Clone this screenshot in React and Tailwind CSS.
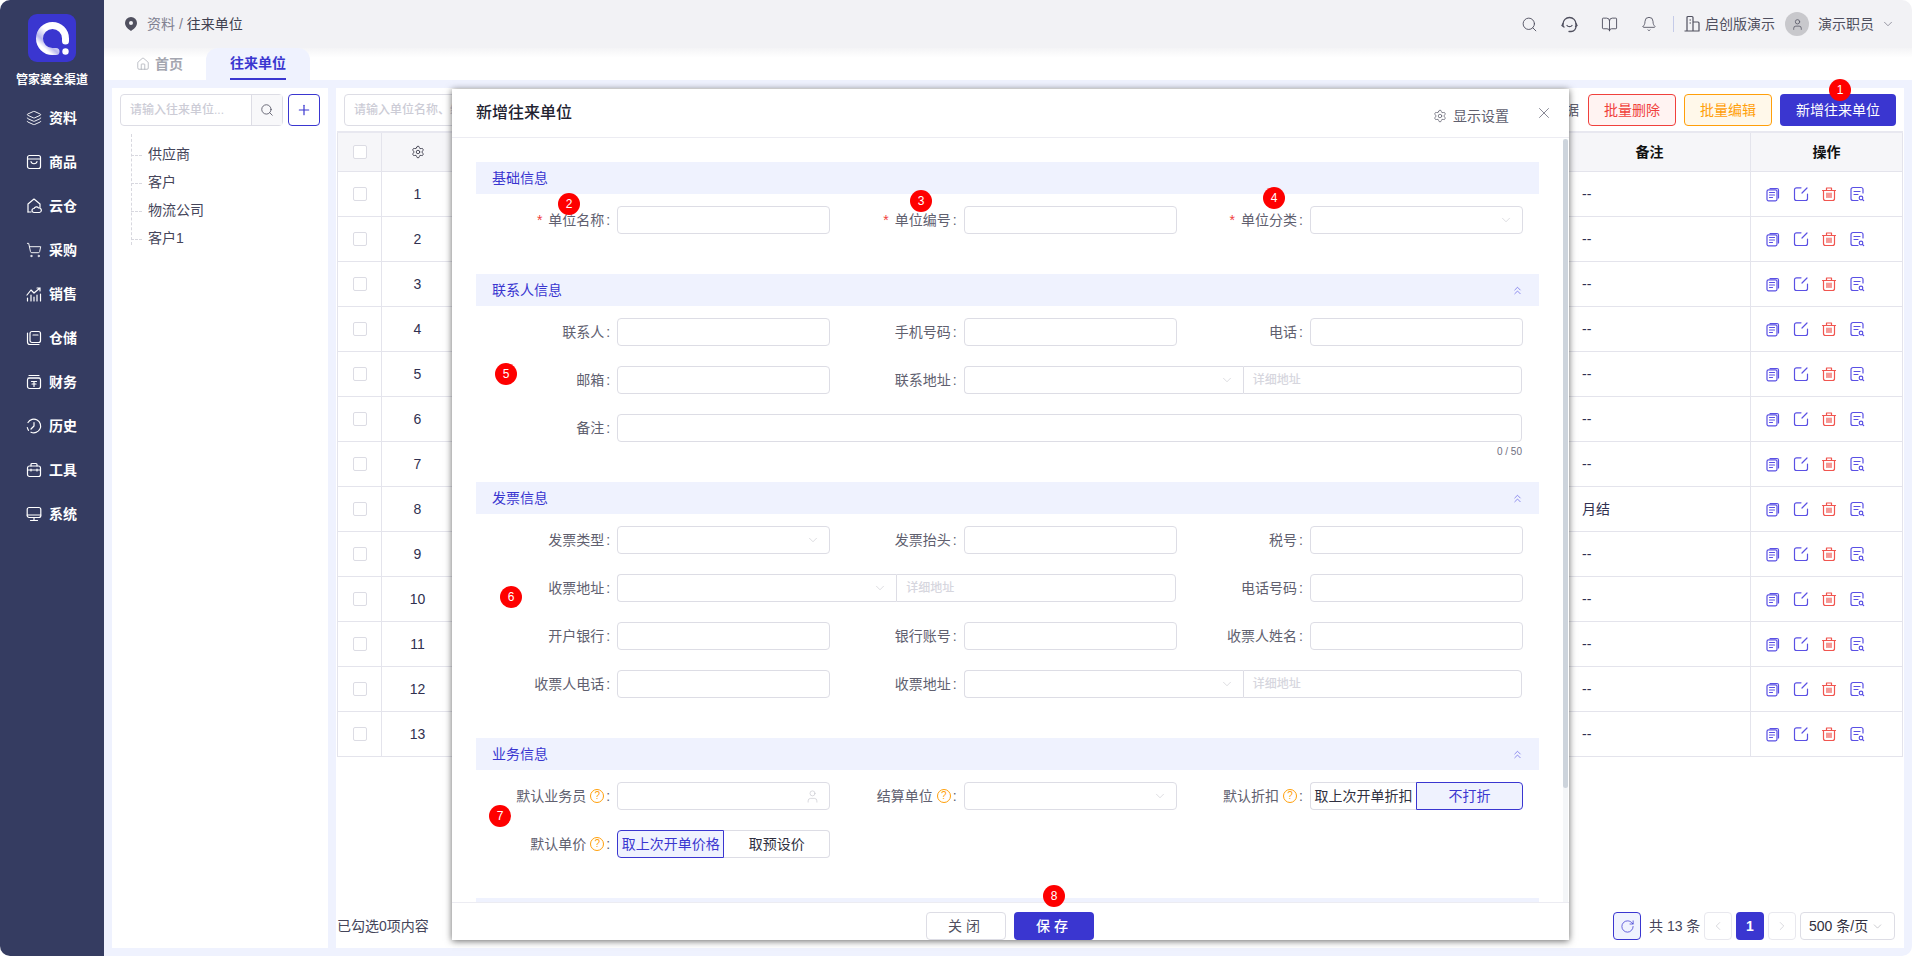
import React from "react";
import { Layers, ShoppingCart, Settings, Search, X, ChevronDown, ChevronsUp, User, RotateCw, BookOpen, Bell, Home, ChevronLeft, ChevronRight, Plus } from "lucide-react";

const Svg = ({ children, size = 16, className = "" }) => (
  <svg width={size} height={size} viewBox="0 0 16 16" fill="none" stroke="currentColor" strokeWidth="1.2" strokeLinecap="round" strokeLinejoin="round" className={className}>{children}</svg>
);

const navIcons = {
  goods: <><rect x="1.5" y="1.5" width="13" height="13" rx="2" /><path d="M1.5 5h13M5 7.5c.5 3 5.500 3 6 0" /></>,
  cloud: <><path d="M2 14V6l6-5 6 5v3" /><path d="M2 14h3M8 14.500a2 2 0 0 1 0-4 2.500 2.500 0 0 1 4.500-.5 2.300 2.300 0 0 1 1 4.500z" /></>,
  sale: <><path d="M1 9l4-5 3 3 6-5M11 2h3v3M1.500 12v3M5 9v6M8 11v4M11 9v6M14.500 8v7" /></>,
  store: <><path d="M1.500 3v9a2.500 2.500 0 0 0 2.500 2.500h9" /><rect x="4" y="1.500" width="10.500" height="11" rx="2" /><path d="M7 5h5" /></>,
  money: <><path d="M3 1.500h10M2 4h12" /><rect x="1.500" y="4" width="13" height="10.500" rx="2" /><path d="M5.500 7.500h5M8 7.500v5M6 10h4" /></>,
  history: <><path d="M5 14.200A6.800 6.800 0 1 0 2 4.500" /><path d="M1.300 9.500a6.800 6.800 0 0 0 1.200 2.800M8 4.500V8l-3 3" /></>,
  tool: <><path d="M5 4V2.500a1 1 0 0 1 1-1h4a1 1 0 0 1 1 1V4" /><rect x="1.500" y="4" width="13" height="10.500" rx="2" /><path d="M1.500 8h13M5 7v2M11 7v2" /></>,
  sys: <><rect x="1.200" y="1.500" width="13.600" height="10" rx="2" /><path d="M1.200 9h13.600M8 11.500v3M4.500 14.500h7" /></>,
};

const nav = [
  ["资料", <Layers size={16} strokeWidth={1.4} />],
  ["商品", <Svg>{navIcons.goods}</Svg>],
  ["云仓", <Svg>{navIcons.cloud}</Svg>],
  ["采购", <ShoppingCart size={16} strokeWidth={1.4} />],
  ["销售", <Svg>{navIcons.sale}</Svg>],
  ["仓储", <Svg>{navIcons.store}</Svg>],
  ["财务", <Svg>{navIcons.money}</Svg>],
  ["历史", <Svg>{navIcons.history}</Svg>],
  ["工具", <Svg>{navIcons.tool}</Svg>],
  ["系统", <Svg>{navIcons.sys}</Svg>],
];

const Logo = () => (
  <svg width="48" height="48" viewBox="0 0 48 48">
    <defs>
      <linearGradient id="lg" x1="0.9" y1="0.1" x2="0.2" y2="0.9">
        <stop offset="0.45" stopColor="#ffffff" />
        <stop offset="0.8" stopColor="#b9b8ee" />
        <stop offset="1" stopColor="#ffffff" />
      </linearGradient>
    </defs>
    <rect width="48" height="48" rx="9" fill="#3a36d0" />
    <path d="M37.500 27V24.500A13 13 0 1 0 24.500 37.500H28" fill="none" stroke="url(#lg)" strokeWidth="7" strokeLinecap="round" />
    <circle cx="37.500" cy="37.500" r="3.200" fill="#fff" />
  </svg>
);

const Sidebar = () => (
  <aside className="w-[104px] shrink-0 bg-[#353c61] flex flex-col text-white">
    <div className="flex flex-col items-center pt-[14px]">
      <Logo />
      <div className="mt-[9px] text-[12px] leading-[18px] font-bold whitespace-nowrap">管家婆全渠道</div>
    </div>
    <nav className="mt-[7px] flex flex-col">
      {nav.map(([t, ic]) => (
        <div key={t} className="h-[44px] flex items-center gap-[7px] pl-[26px]">
          {ic}
          <span className="text-[14px] font-bold">{t}</span>
        </div>
      ))}
    </nav>
  </aside>
);

const Header = () => (
  <header className="h-[48px] shrink-0 bg-[#f2f2f5] flex items-center pl-[21px] pr-[17px] text-[14px] text-[#50505f]">
    <svg width="12" height="14" viewBox="0 0 12 14" className="mr-[10px]"><path fillRule="evenodd" d="M6 0a6 6 0 0 1 6 6c0 3.500-3.500 6.500-6 8-2.500-1.500-6-4.500-6-8a6 6 0 0 1 6-6zm0 4a2 2 0 1 0 0 4 2 2 0 0 0 0-4z" fill="#50505f" /></svg>
    <span className="text-[#808090]">资料 / </span><span className="ml-1 text-[#40404f]">往来单位</span>
    <div className="ml-auto flex items-center">
      <Search size={17} strokeWidth={1.3} className="mr-[23px]" />
      <svg width="17" height="17" viewBox="0 0 17 17" fill="none" stroke="currentColor" strokeWidth="1.3" strokeLinecap="round" className="mr-[23px]"><path d="M2 9.500V8a6.500 6.500 0 0 1 13 0v2a5 5 0 0 1-5 5.500H8" /><path d="M2 7.500 L1 9.500 L3 11M15 7.500l1 2-1.500 1M6 9.500c1 1.500 4 1.500 5 0" /></svg>
      <BookOpen size={17} strokeWidth={1.3} className="mr-[23px]" />
      <Bell size={16} strokeWidth={1.3} className="mr-[16px]" />
      <div className="w-px h-[16px] bg-[#c5cbe8] mr-[10px]" />
      <svg width="16" height="18" viewBox="0 0 16 18" fill="none" stroke="currentColor" strokeWidth="1.200" className="mr-[5px]"><path d="M3 16V2.500a1 1 0 0 1 1-1h4a1 1 0 0 1 1 1V16M9 7h5a1 1 0 0 1 1 1v8M.5 16h15M5.500 5h1.500M5.500 8h1.500" /></svg>
      <span>启创版演示</span>
      <div className="ml-[10px] w-[24px] h-[24px] rounded-full bg-[#c8c8cc] flex items-center justify-center text-[#50505f]"><User size={13} strokeWidth={1.4} /></div>
      <span className="ml-[9px]">演示职员</span>
      <ChevronDown size={14} strokeWidth={1.2} className="ml-[7px] text-[#70707f]" />
    </div>
  </header>
);

const Tabs = () => (
  <div className="h-[32px] shrink-0 flex bg-gradient-to-b from-[#f4f4f6] to-white to-[30%] pl-[32px] items-stretch">
    <div className="w-[70px] flex items-center gap-[5px] text-[14px] font-bold text-[#a4a6b0]">
      <Home size={14} strokeWidth={1.2} /> 首页
    </div>
    <div className="w-[104px] bg-[#eff2fe] rounded-t-[12px] flex justify-center">
      <div className="h-full border-b-2 border-[#3a36d0] text-[14px] font-bold text-[#3a36d0] flex items-center w-[56px] whitespace-nowrap">往来单位</div>
    </div>
  </div>
);

const tree = ["供应商", "客户", "物流公司", "客户1"];

const LeftPanel = () => (
  <section className="w-[216px] shrink-0 bg-white flex flex-col px-2 pt-[6px]">
    <div className="flex gap-[5px]">
      <div className="flex w-[163px] h-[32px] border border-[#dddde5] rounded-[4px]">
        <div className="flex-1 flex items-center pl-[9px] text-[12px] font-medium text-[#ccccd6]">请输入往来单位...</div>
        <div className="w-[31px] border-l border-[#dddde5] bg-[#f8f8fa] flex items-center justify-center text-[#505060]"><Search size={14} strokeWidth={1.4} /></div>
      </div>
      <div className="w-[32px] h-[32px] border border-[#3a36d0] rounded-[4px] flex items-center justify-center text-[#3a36d0]"><Plus size={16} strokeWidth={1.8} /></div>
    </div>
    <div className="relative mt-[14px] ml-[28px] text-[14px] text-[#45455a]">
      <div className="absolute left-[-17px] top-[-6px] h-[111px] border-l border-dashed border-[#d8d8df]" />
      {tree.map((t) => (
        <div key={t} className="relative h-[28px] flex items-center">
          <div className="absolute left-[-17px] top-[15px] w-[11px] border-t border-dashed border-[#d8d8df]" />
          {t}
        </div>
      ))}
    </div>
  </section>
);

const Check = () => <span className="block w-[14px] h-[14px] rounded-[2px] border border-[#dcdce4] bg-white" />;

const A = ({ children, c = "#5a50e4" }) => (
  <svg width="16" height="16" viewBox="0 0 16 16" fill="none" stroke={c} strokeWidth="1.200" strokeLinecap="round" strokeLinejoin="round">{children}</svg>
);

const RowActions = () => (
  <div className="flex gap-[12px] pl-[14px]">
    <A><path d="M5 2.500h7a1.500 1.500 0 0 1 1.500 1.500v8" /><rect x="2" y="3.800" width="10" height="11" rx="1.500" /><path d="M4.500 6.500h5M4.500 9h5M4.500 11.500h3" /></A>
    <A><path d="M8 1.800H3.500a2 2 0 0 0-2 2v8.700a2 2 0 0 0 2 2h9a2 2 0 0 0 2-2V8M9 7l5-5" /></A>
    <A c="#f0554f"><path d="M1.500 4.500h13M5.500 4V2h5v2" /><path d="M2.500 4.500v8a2 2 0 0 0 2 2h7a2 2 0 0 0 2-2v-8M6 7v4.500M8 7v4.500M10 7v4.500" /></A>
    <A><path d="M14 7V3.500a2 2 0 0 0-2-2H4a2 2 0 0 0-2 2v9a2 2 0 0 0 2 2h5M5 5.500h6M5 8.500h4" /><circle cx="12" cy="12" r="1.800" /><path d="M13.500 13.500l1.200 1.200" /></A>
  </div>
);

const rows = Array.from({ length: 13 }, (_, i) => i + 1);

const Table = () => (
  <div className="mx-px mt-[5px] border-t-2 border-[#e8e8f0] text-[14px] text-[#303050]">
    <div className="flex h-[39px] bg-[#f6f6f9] border-b border-[#e4e4ec] font-bold text-[#111]">
      <div className="w-[45px] border-l border-r border-[#e4e4ec] flex items-center justify-center"><Check /></div>
      <div className="w-[72px] border-r border-[#e4e4ec] flex items-center justify-center text-[#303040]"><Settings size={14} strokeWidth={1.4} /></div>
      <div className="flex-1" />
      <div className="w-[202px] border-r border-[#e4e4ec] flex items-center justify-center">备注</div>
      <div className="w-[152px] border-r border-[#e4e4ec] flex items-center justify-center">操作</div>
    </div>
    {rows.map((n) => (
      <div key={n} className="flex h-[45px] border-b border-[#e4e4ec]">
        <div className="w-[45px] border-l border-r border-[#e4e4ec] flex items-center justify-center"><Check /></div>
        <div className="w-[72px] border-r border-[#e4e4ec] flex items-center justify-center">{n}</div>
        <div className="flex-1" />
        <div className="w-[202px] border-r border-[#e4e4ec] flex items-center pl-[33px]">{n === 8 ? "月结" : "--"}</div>
        <div className="w-[152px] border-r border-[#e4e4ec] flex items-center"><RowActions /></div>
      </div>
    ))}
  </div>
);

const RightPanel = () => (
  <section className="flex-1 min-w-0 bg-white flex flex-col">
    <div className="flex items-center pt-[6px] pl-2 pr-2">
      <div className="w-[300px] h-[32px] border border-[#dddde5] rounded-[4px] flex items-center pl-[9px] text-[12px] font-medium text-[#ccccd6]">请输入单位名称、编号</div>
      <span className="ml-auto text-[14px] text-[#606070]">数据</span>
      <button className="ml-[9px] w-[88px] h-[32px] rounded-[4px] border border-[#f0403c] bg-[#fff3f2] text-[14px] text-[#f0403c]">批量删除</button>
      <button className="ml-2 w-[88px] h-[32px] rounded-[4px] border border-[#ff9f0a] bg-[#fff8ea] text-[14px] text-[#ff9f0a]">批量编辑</button>
      <button className="ml-2 w-[116px] h-[32px] rounded-[4px] bg-[#3a36d0] text-[14px] text-white">新增往来单位</button>
    </div>
    <Table />
    <div className="mt-auto pb-2 pl-px pr-[9px] flex items-center text-[14px] text-[#45455a]">
      <span>已勾选0项内容</span>
      <div className="ml-auto flex items-center">
        <div className="w-[28px] h-[28px] border border-[#3a36d0] bg-[#eff2fe] rounded-[4px] flex items-center justify-center text-[#3a36d0]"><RotateCw size={15} strokeWidth={1.2} /></div>
        <span className="ml-[8px] w-[55px] whitespace-nowrap">共 13 条</span>
        <div className="w-[28px] h-[28px] border border-[#e8e8ee] rounded-[4px] flex items-center justify-center text-[#c8c8d0]"><ChevronLeft size={14} strokeWidth={1.2} /></div>
        <div className="ml-1 w-[28px] h-[28px] bg-[#3a36d0] rounded-[4px] flex items-center justify-center text-white font-bold">1</div>
        <div className="ml-1 w-[28px] h-[28px] border border-[#e8e8ee] rounded-[4px] flex items-center justify-center text-[#c8c8d0]"><ChevronRight size={14} strokeWidth={1.2} /></div>
        <div className="ml-[4px] w-[95px] h-[28px] border border-[#dddde5] rounded-[4px] flex items-center pl-2 whitespace-nowrap text-[#303040]">500 条/页<ChevronDown size={13} strokeWidth={1} className="ml-[3px] text-[#a0a0a8]" /></div>
      </div>
    </div>
  </section>
);

const Help = () => (
  <span className="w-[14px] h-[14px] rounded-full border border-[#ff9f0a] text-[#ff9f0a] text-[10px] leading-[12px] text-center ml-[4px] shrink-0">?</span>
);

const Label = ({ text, req, help }) => (
  <div className="w-[125.33px] shrink-0 flex items-center justify-end text-[14px] text-[#60606f] whitespace-nowrap">
    {req && <span className="text-[#f0403c] mr-[6px]">*</span>}
    <span>{text}</span>
    {help && <Help />}
    <span className="ml-[2px] w-[3px]">:</span>
  </div>
);

const box = "h-[28px] border border-[#dddde5] rounded-[4px] bg-white";

const Field = ({ label, req, help, children, span = "" }) => (
  <div className={`flex items-center gap-2 h-[28px] ${span}`}>
    <Label text={label} req={req} help={help} />
    {children || <div className={`${box} flex-1`} />}
  </div>
);

const Select = () => (
  <div className={`${box} flex-1 flex items-center justify-end pr-[9px] text-[#c4c4cc]`}><ChevronDown size={14} strokeWidth={1} /></div>
);

const Address = () => (
  <div className="flex-1 flex h-[28px] mr-px">
    <div className="w-[279px] border border-[#dddde5] border-r-0 rounded-l-[4px] flex items-center justify-end pr-[9px] text-[#c4c4cc]"><ChevronDown size={14} strokeWidth={1} /></div>
    <div className="flex-1 border border-[#dddde5] rounded-r-[4px] flex items-center pl-[9px] text-[12px] font-medium text-[#d6d6de]">详细地址</div>
  </div>
);

const Radio = ({ items, active }) => (
  <div className="flex-1 flex h-[28px] text-[14px] text-[#303040]">
    {items.map((t, i) => (
      <div key={t} className={`flex-1 flex items-center justify-center whitespace-nowrap border ${i === 0 ? "rounded-l-[4px]" : "rounded-r-[4px]"} ${i === active ? "border-[#3a36d0] bg-[#eff2fe] text-[#3a36d0]" : `border-[#dddde5] ${i === 0 ? "border-r-0" : "border-l-0"}`}`}>{t}</div>
    ))}
  </div>
);

const Section = ({ title, folded = true, className = "" }) => (
  <div className={`h-[32px] bg-[#eff2fe] flex items-center justify-between pl-4 pr-[15px] text-[14px] text-[#3a36d0] ${className}`}>
    <span>{title}</span>
    {folded && <ChevronsUp size={13} strokeWidth={1.2} className="text-[#5a57e4]" />}
  </div>
);

const Grid = ({ children, className = "" }) => (
  <div className={`ml-2 mr-[16px] mt-3 grid grid-cols-3 gap-y-5 ${className}`}>{children}</div>
);

const Modal = () => (
  <div className="absolute left-[452px] top-[89px] w-[1117px] h-[851px] bg-white flex flex-col shadow-[0_1px_7px_rgba(0,0,0,0.6)]">
    <div className="h-[49px] shrink-0 border-b border-[#ececf2] flex items-center pl-6 pr-[16px]">
      <span className="text-[16px] font-medium text-[#222230]">新增往来单位</span>
      <div className="ml-auto flex items-center gap-[6px] pt-[6px] text-[14px] text-[#60606f]">
        <Settings size={14} strokeWidth={1.3} />显示设置
      </div>
      <X size={18} strokeWidth={1.1} className="ml-[26px] text-[#70707f]" />
    </div>
    <div className="relative flex-1 min-h-0 overflow-hidden pl-6 pr-[30px] pt-6">
      <div className="absolute right-[1px] top-[1px] bottom-0 w-[5px] bg-[#f4f6f8]" />
      <div className="absolute right-[1px] top-[1px] h-[649px] w-[5px] rounded-full bg-[#cdd4dc]" />

      <Section title="基础信息" folded={false} />
      <Grid>
        <Field label="单位名称" req />
        <Field label="单位编号" req />
        <Field label="单位分类" req><Select /></Field>
      </Grid>

      <Section title="联系人信息" className="mt-10" />
      <Grid>
        <Field label="联系人" />
        <Field label="手机号码" />
        <Field label="电话" />
        <Field label="邮箱" />
        <Field label="联系地址" span="col-span-2"><Address /></Field>
        <Field label="备注" span="col-span-3"><div className={`${box} flex-1 mr-px`} /></Field>
      </Grid>
      <div className="ml-2 mr-[17px] h-[18px] mt-[1px] text-right text-[10px] leading-[18px] text-[#70707f]">0 / 50</div>

      <Section title="发票信息" className="mt-[21px]" />
      <Grid>
        <Field label="发票类型"><Select /></Field>
        <Field label="发票抬头" />
        <Field label="税号" />
        <Field label="收票地址" span="col-span-2"><Address /></Field>
        <Field label="电话号码" />
        <Field label="开户银行" />
        <Field label="银行账号" />
        <Field label="收票人姓名" />
        <Field label="收票人电话" />
        <Field label="收票地址" span="col-span-2"><Address /></Field>
      </Grid>

      <Section title="业务信息" className="mt-10" />
      <Grid>
        <Field label="默认业务员" help>
          <div className={`${box} flex-1 flex items-center justify-end pr-[9px] text-[#c4c4cc]`}><User size={15} strokeWidth={1} /></div>
        </Field>
        <Field label="结算单位" help><Select /></Field>
        <Field label="默认折扣" help><Radio items={["取上次开单折扣", "不打折"]} active={1} /></Field>
        <Field label="默认单价" help><Radio items={["取上次开单价格", "取预设价"]} active={0} /></Field>
      </Grid>
      <Section title="" folded={false} className="mt-10" />
    </div>
    <div className="h-[38px] shrink-0 border-t border-[#ececf2] flex justify-center items-start pt-[9px] gap-2 pr-[1px] overflow-hidden">
      <button className="w-[80px] h-[28px] border border-[#dddde5] rounded-[4px] text-[14px] tracking-[4px] text-[#505060]">关闭</button>
      <button className="w-[80px] h-[28px] bg-[#3a36d0] rounded-[4px] text-[14px] font-medium tracking-[4px] text-white">保存</button>
    </div>
  </div>
);

const badges = [
  [1, 1840, 90], [2, 569, 204], [3, 921, 201], [4, 1274, 198],
  [5, 506, 374], [6, 511, 597], [7, 500, 816], [8, 1054, 896],
];
const badgeStyle = (x, y) => ({ left: x - 11, top: y - 11 });

export default function App() {
  return (
    <div className="relative w-[1912px] h-[956px] overflow-hidden rounded-[10px] flex font-['Liberation_Sans','Noto_Sans_CJK_SC',sans-serif]">
      <Sidebar />
      <div className="flex-1 min-w-0 flex flex-col">
        <Header />
        <Tabs />
        <main className="flex-1 min-h-0 bg-[#eff2fe] p-2 flex gap-2">
          <LeftPanel />
          <RightPanel />
        </main>
      </div>
      <Modal />
      {badges.map(([n, x, y]) => (
        <div key={n} style={badgeStyle(x, y)} className="absolute w-[22px] h-[22px] rounded-full bg-[#fe0000] text-white text-[12px] flex items-center justify-center">{n}</div>
      ))}
    </div>
  );
}
